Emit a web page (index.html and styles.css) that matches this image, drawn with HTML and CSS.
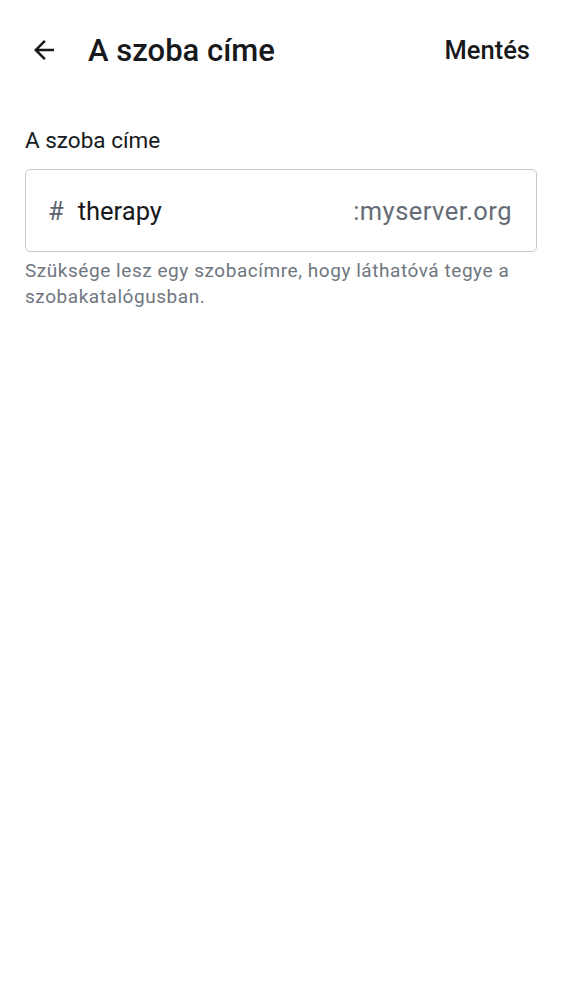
FILE: index.html
```html
<!DOCTYPE html>
<html lang="hu">
<head>
<meta charset="utf-8">
<link rel="stylesheet" href="styles.css">
</head>
<body>
<header class="toolbar">
  <button class="back" aria-label="Vissza">
    <svg width="30" height="30" viewBox="0 0 24 24"><path d="M20 11H7.83l5.59-5.59L12 4l-8 8 8 8 1.41-1.41L7.83 13H20v-2z" fill="#17191c"/></svg>
  </button>
  <h1 class="title">A szoba címe</h1>
  <span class="save">Mentés</span>
</header>
<main class="content">
  <div class="label">A szoba címe</div>
  <div class="field">
    <span class="hash">#</span>
    <span class="local">therapy</span>
    <span class="server">:myserver.org</span>
  </div>
  <p class="help">Szüksége lesz egy szobacímre, hogy láthatóvá tegye a szobakatalógusban.</p>
</main>
</body>
</html>
```
FILE: styles.css
```css
html, body {
  margin: 0;
  padding: 0;
  background: #fff;
  font-family: Roboto, "Noto Sans", sans-serif;
  color: #17191c;
}
.toolbar {
  display: flex;
  align-items: center;
  height: 100px;
  padding: 0 32px 0 28px;
  box-sizing: border-box;
}
.back {
  border: 0;
  background: none;
  padding: 0;
  width: 32px;
  height: 32px;
  display: flex;
  align-items: center;
  justify-content: center;
}
.title {
  margin: 0 0 0 28px;
  font-size: 31px;
  font-weight: 500;
  flex: 1;
}
.save {
  font-size: 25.5px;
  font-weight: 500;
}
.content {
  padding: 25px 25px 0 25px;
}
.label {
  font-size: 22.5px;
  line-height: 30px;
}
.field {
  margin-top: 14px;
  height: 83px;
  box-sizing: border-box;
  border: 1.5px solid #c4c8cf;
  border-radius: 5px;
  display: flex;
  align-items: center;
  padding: 0 24px 0 22px;
  font-size: 25.5px;
}
.hash {
  color: #5c6470;
  margin-right: 14px;
}
.local { flex: 1; }
.server {
  color: #656c77;
  letter-spacing: 0.45px;
}
.help {
  margin: 6px 0 0 0;
  font-size: 19px;
  line-height: 26px;
  color: #6f7680;
  letter-spacing: 0.55px;
}
```
